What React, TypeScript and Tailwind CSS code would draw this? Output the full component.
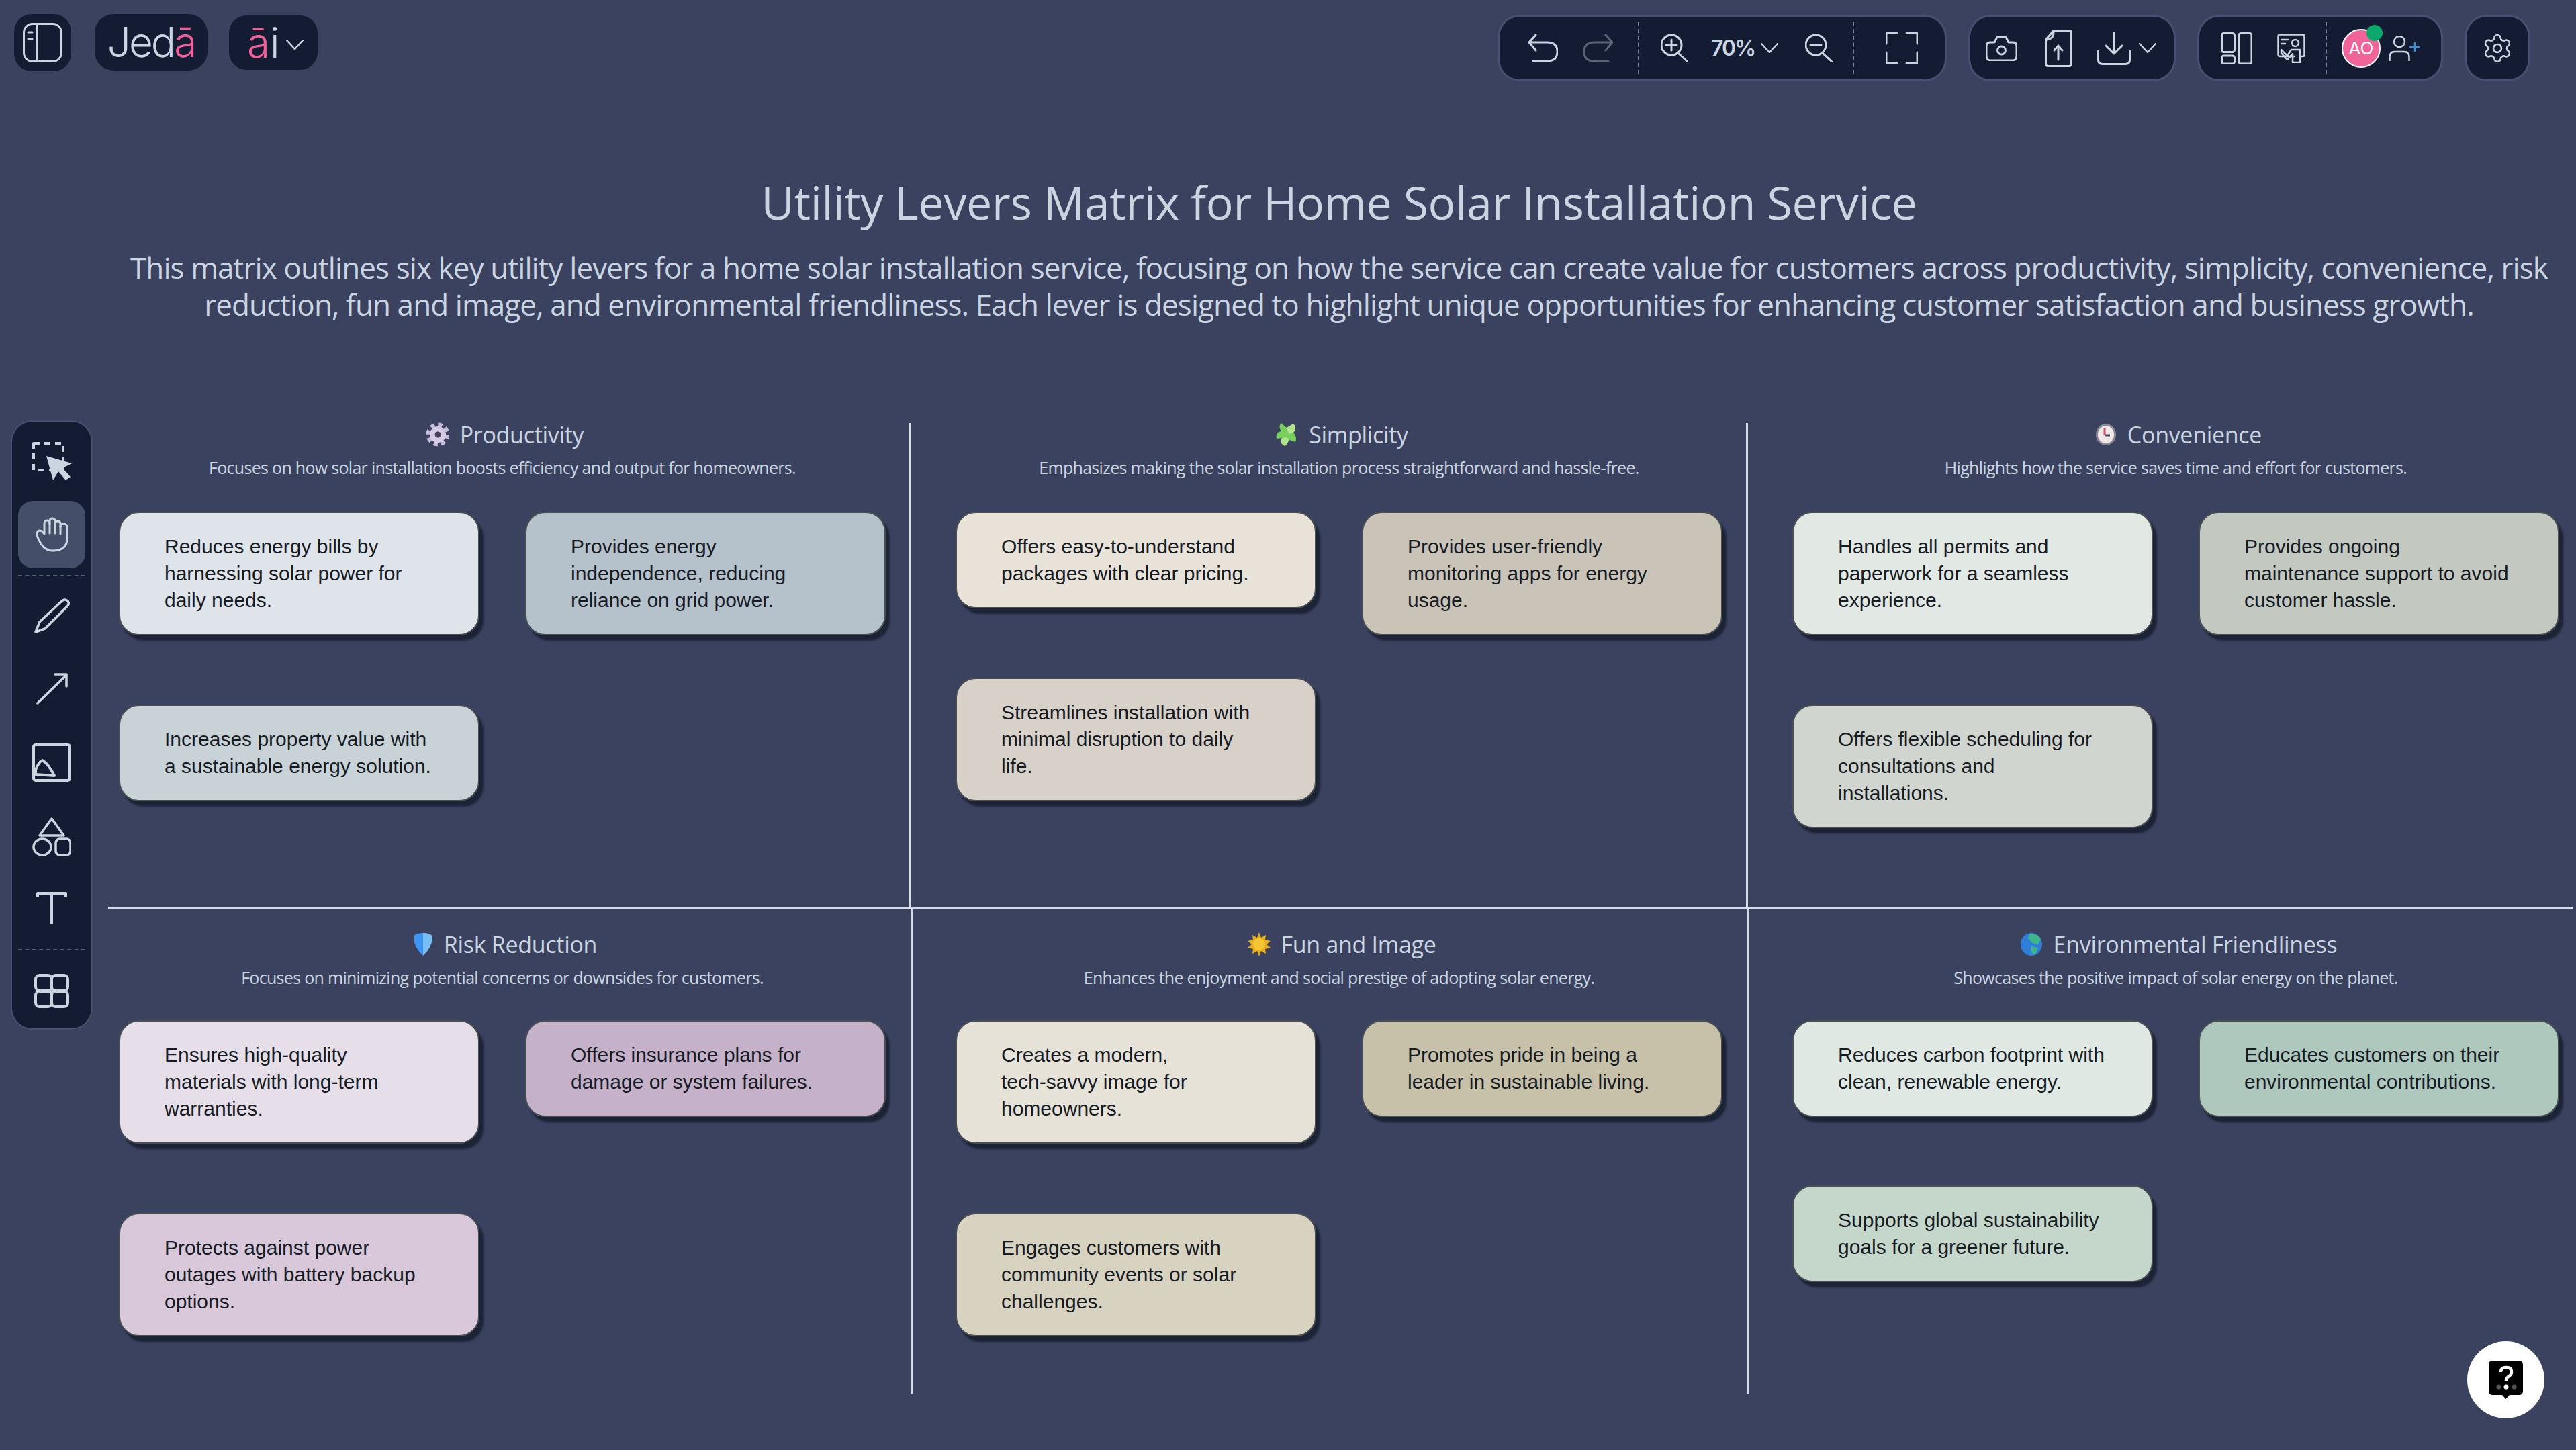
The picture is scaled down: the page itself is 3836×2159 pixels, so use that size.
import React from "react";
import { Settings } from "lucide-react";

const iconColor = "#cbd5e1";

interface SvgProps {
  w: number;
  h: number;
  stroke?: string;
  sw?: number;
  className?: string;
  children: React.ReactNode;
}

// every toolbar icon is drawn in real pixels, so the viewBox is the size
const Ico: React.FC<SvgProps> = ({ w, h, stroke = iconColor, sw = 3, className, children }) => (
  <svg
    width={w}
    height={h}
    viewBox={`0 0 ${w} ${h}`}
    fill="none"
    stroke={stroke}
    strokeWidth={sw}
    strokeLinecap="round"
    strokeLinejoin="round"
    className={`shrink-0 ${className ?? ""}`}
  >
    {children}
  </svg>
);

const Chevron: React.FC<{ className?: string; w?: number; h?: number }> = ({ className, w = 26, h = 15 }) => (
  <Ico w={w} h={h} sw={2.5} className={className}>
    <path d={`M1 1 L${w / 2} ${h - 1} L${w - 1} 1`} />
  </Ico>
);

const DashV: React.FC<{ className?: string }> = ({ className }) => (
  <div className={`h-[77px] w-0 border-l-2 border-dashed border-[#7b849c] ${className ?? ""}`} />
);

const DashH: React.FC<{ className?: string }> = ({ className }) => (
  <div className={`h-0 w-[100px] border-t-2 border-dashed border-[#56607c] ${className ?? ""}`} />
);

const Group: React.FC<{ className?: string; children: React.ReactNode }> = ({ className, children }) => (
  <div className={`flex h-[93px] items-center rounded-[30px] bg-[#141c33] ring-[3px] ring-[#475070] ${className ?? ""}`}>
    {children}
  </div>
);

const Toolbar: React.FC = () => (
  <div className="flex items-start justify-between pl-[21px] pr-[71px] pt-[21px]">
    <div className="flex items-start">
      <div className="flex h-[85px] w-[85px] items-center justify-center rounded-[26px] bg-[#141c33]">
        <Ico w={59} h={59}>
          <rect x="1.5" y="1.5" width="56" height="56" rx="13" />
          <path d="M21 2 V57 M8 14 H14 M8 24 H14" />
        </Ico>
      </div>
      <div className="ml-[35px] flex h-[84px] w-[168px] items-center justify-center rounded-[28px] bg-[#141c33] font-['Inter',sans-serif] text-[62px] font-light leading-none tracking-[-3px] text-[#cbd5e1]">
        Jed<span className="text-[#f0609a]">ā</span>
      </div>
      <div className="ml-[32px] mt-[2px] flex h-[81px] w-[132px] items-center rounded-[26px] bg-[#141c33] pl-[27px] font-['Inter',sans-serif] text-[62px] font-light leading-none text-[#cbd5e1]">
        <span className="text-[#f0609a]">ā</span>i
        <Chevron className="ml-[9px] mt-[6px]" />
      </div>
    </div>

    <div className="mt-[4px] flex items-start">
      <Group className="w-[663px] pl-[43px]">
        <Ico w={44} h={41}>
          <path d="M11 1 L1 12 L11 24 M1 12 H28 Q43 12 43 26 Q43 40 28 40 H7" />
        </Ico>
        <Ico w={44} h={41} stroke="#5b6375" className="ml-[38px]">
          <path d="M33 1 L43 12 L33 24 M43 12 H16 Q1 12 1 26 Q1 40 16 40 H37" />
        </Ico>
        <DashV className="ml-[37px]" />
        <Ico w={41} h={42} className="ml-[32px]">
          <circle cx="16" cy="16" r="15" />
          <path d="M27 29 L40 41 M16 8 V24 M8 16 H24" />
        </Ico>
        <span className="ml-[34px] w-[60px] font-['Inter',sans-serif] text-[32px] font-semibold tracking-[-2px] text-[#cbd5e1]">
          70%
        </span>
        <Chevron className="ml-[14px]" />
        <Ico w={41} h={42} className="ml-[40px]">
          <circle cx="16" cy="16" r="15" />
          <path d="M27 29 L40 41 M8 16 H24" />
        </Ico>
        <DashV className="ml-[30px]" />
        <Ico w={48} h={48} className="ml-[47px]">
          <path d="M1 17 V1.5 H17 M31 1.5 H47 V17 M1 30 V46.5 H17 M47 30 V46.5 H31" />
        </Ico>
      </Group>

      <Group className="ml-[38px] w-[303px] pl-[23px]">
        <Ico w={47} h={38}>
          <path d="M7 10 H13 L17 2 H30 L34 10 H40 Q46 10 46 16 V30 Q46 37 40 37 H7 Q1 37 1 30 V16 Q1 10 7 10 Z" />
          <circle cx="23.5" cy="22" r="6" />
        </Ico>
        <Ico w={41} h={56} className="ml-[41px]">
          <path d="M13 1.5 H36 Q39.5 1.5 39.5 5 V51 Q39.5 54.5 36 54.5 H5 Q1.5 54.5 1.5 51 V15 Z M13 1.5 Q14 15 1.5 15" />
          <path d="M20 45 V24 M14 31 L20 24 L26 31" />
        </Ico>
        <Ico w={50} h={50} className="ml-[37px]">
          <path d="M25 1 V33 M13 21 L25 33 L37 21 M1.5 29 V42 Q1.5 48.5 8 48.5 H42 Q48.5 48.5 48.5 42 V29" />
        </Ico>
        <Chevron className="ml-[12px]" />
      </Group>

      <Group className="ml-[38px] w-[360px] pl-[32px]">
        <Ico w={47} h={48}>
          <rect x="1.5" y="1.5" width="19" height="28" rx="3" />
          <rect x="1.5" y="35" width="19" height="12" rx="3" />
          <rect x="27" y="1.5" width="19" height="45.5" rx="3" />
        </Ico>
        <Ico w={42} h={44} sw={2.5} className="ml-[37px]">
          <path d="M26 34 H4 Q1.5 34 1.5 31 V4 Q1.5 1.5 4 1.5 H38 Q40.5 1.5 40.5 4 V32 Q40.5 34 38 34 H36" />
          <path d="M6 9 H16 M6 15 H12" />
          <circle cx="27" cy="14" r="5" />
          <path d="M6 24 L15 33 L21 24 H34 V43 H23 V30 L15 39 L6 29 Z" />
        </Ico>
        <DashV className="ml-[30px]" />
        <div className="relative ml-[22px] flex h-[58px] w-[58px] items-center justify-center rounded-full border-2 border-white bg-[#f0649a] font-['Inter',sans-serif] text-[26px] text-white">
          AO
          <span className="absolute -right-[5px] -top-[8px] h-[24px] w-[24px] rounded-full bg-[#0aa86a]" />
        </div>
        <Ico w={46} h={38} sw={2.5} className="ml-[12px]">
          <circle cx="16" cy="9" r="8" />
          <path d="M1.5 37 V32 Q1.5 24 9 24 H23 Q30.5 24 30.5 32 V37" />
          <path d="M39 11 V23 M32 17 H45" stroke="#3b8fd6" />
        </Ico>
      </Group>

      <Group className="ml-[38px] w-[92px] justify-center ring-0">
        <Settings size={48} strokeWidth={1.3} color={iconColor} />
      </Group>
    </div>
  </div>
);

const Sidebar: React.FC = () => (
  <div className="absolute left-[18px] top-[628px] flex h-[903px] w-[118px] flex-col items-center rounded-[30px] bg-[#141c33] pt-[30px] ring-[2px] ring-[#475070]">
    <Ico w={59} h={56} sw={4}>
      <path d="M2 2 H46 V42 H2 Z" strokeDasharray="9 7" strokeLinecap="butt" />
      <path d="M21 21 L59 32 L45 39 L57 52 L50 57 L39 44 L31 57 Z" fill={iconColor} stroke="none" />
    </Ico>
    <div className="mt-[32px] flex h-[100px] w-[100px] items-center justify-center rounded-[22px] bg-[#444e69]">
      <Ico w={49} h={52}>
        <path d="M2 27 Q1 21 6 20 Q10 20 13 25 V10 Q13 5 17 5 Q21 5 21 10 V6 Q21 2 25 2 Q29 2 29 6 V10 Q29 6 33 6 Q37 6 37 10 V14 Q37 10 41 10 Q47 10 47 15 V32 Q47 50 25 50 Q10 50 2 27 Z" />
        <path d="M21 9 V24 M29 9 V24 M37 13 V25" />
      </Ico>
    </div>
    <DashH className="mt-[10px]" />
    <Ico w={53} h={53} sw={3.5} className="mt-[32px]">
      <path d="M2 51 L8 36 L41 5 Q46 1 50 5 Q53 9 49 13 L16 46 Z" />
    </Ico>
    <Ico w={47} h={47} sw={3.5} className="mt-[59px]">
      <path d="M2 45 L45 3 M28 2 H45 V20" />
    </Ico>
    <Ico w={58} h={57} sw={4} className="mt-[58px]">
      <rect x="2" y="2" width="54" height="53" rx="3" />
      <path d="M5 39 Q10 27 15 25 Q24 30 33 48 L5 46 Z" />
    </Ico>
    <Ico w={58} h={58} sw={3.5} className="mt-[53px]">
      <path d="M29 2 L47 27 H11 Z" />
      <ellipse cx="15" cy="44" rx="13" ry="12" />
      <rect x="35" y="32" width="22" height="24" rx="6" />
    </Ico>
    <Ico w={46} h={50} sw={4} className="mt-[53px]">
      <path d="M2 8 V2 H44 V8 M23 2 V48" strokeLinecap="butt" />
    </Ico>
    <DashH className="mt-[35px]" />
    <Ico w={52} h={51} sw={4} className="mt-[35px]">
      <rect x="2" y="2" width="24" height="23" rx="6" />
      <rect x="26" y="2" width="24" height="23" rx="6" />
      <rect x="2" y="26" width="24" height="23" rx="6" />
      <rect x="26" y="26" width="24" height="23" rx="6" />
    </Ico>
  </div>
);

const GearEmoji = () => (
  <svg width="34" height="36" viewBox="0 0 34 36">
    <circle cx="17" cy="18" r="14" fill="none" stroke="#c9bcdd" strokeWidth="7" strokeDasharray="6 5" />
    <circle cx="17" cy="18" r="12" fill="#d6cce5" />
    <circle cx="17" cy="18" r="4.5" fill="#4a4160" />
  </svg>
);

const PuzzleEmoji = () => (
  <svg width="34" height="36" viewBox="0 0 34 36">
    <path d="M9 1 L17 8 L27 2 Q33 8 27 15 Q33 22 30 29 L21 26 L15 35 Q6 32 10 23 L2 24 Q0 14 9 13 Q4 6 9 1 Z" fill="#79cf5c" />
    <path d="M17 8 L27 2 Q33 8 27 15 L20 17 Z M15 35 Q6 32 10 23 L17 22 L21 26 Z" fill="#b2e58b" />
  </svg>
);

const ClockEmoji = () => (
  <svg width="32" height="36" viewBox="0 0 32 36">
    <ellipse cx="16" cy="18" rx="15" ry="16" fill="#8d8791" />
    <ellipse cx="16" cy="18" rx="12" ry="13" fill="#eee9e6" />
    <path d="M14 9 V19" stroke="#e0456f" strokeWidth="3" />
    <path d="M14 19 H22" stroke="#4a4652" strokeWidth="3" />
  </svg>
);

const ShieldEmoji = () => (
  <svg width="30" height="36" viewBox="0 0 30 36">
    <path d="M15 1 Q5 1 2 5 Q-1 20 15 35 Z" fill="#3f96f2" />
    <path d="M15 1 Q25 1 28 5 Q31 20 15 35 Z" fill="#79bdf6" />
  </svg>
);

const SunEmoji = () => (
  <svg width="34" height="36" viewBox="0 0 34 36">
    <path d="M17 0 L20 8 L27 4 L26 11 L34 13 L28 18 L34 23 L26 25 L27 32 L20 28 L17 36 L14 28 L7 32 L8 25 L0 23 L6 18 L0 13 L8 11 L7 4 L14 8 Z" fill="#e8ae1c" />
    <circle cx="17" cy="18" r="9" fill="#f7c531" />
  </svg>
);

const GlobeEmoji = () => (
  <svg width="34" height="36" viewBox="0 0 34 36">
    <ellipse cx="17" cy="18" rx="16" ry="17" fill="#2f7fd8" />
    <path d="M14 3 Q26 1 31 10 L27 18 L19 16 L12 9 Z M17 21 L27 23 L23 33 Q18 33 17 28 Z" fill="#3fb58a" />
  </svg>
);

interface Lever {
  icon: React.ReactNode;
  title: string;
  desc: string;
  rowGap: string;
  cards: { text: string; color: string }[];
}

// card texts carry their own line breaks, they render with whitespace-pre-line
const top: Lever[] = [
  {
    icon: <GearEmoji />,
    title: "Productivity",
    desc: "Focuses on how solar installation boosts efficiency and output for homeowners.",
    rowGap: "gap-y-[103px]",
    cards: [
      { text: "Reduces energy bills by\nharnessing solar power for\ndaily needs.", color: "bg-[#dfe4ea]" },
      { text: "Provides energy\nindependence, reducing\nreliance on grid power.", color: "bg-[#b5c1cb]" },
      { text: "Increases property value with\na sustainable energy solution.", color: "bg-[#c9d3d7]" },
    ],
  },
  {
    icon: <PuzzleEmoji />,
    title: "Simplicity",
    desc: "Emphasizes making the solar installation process straightforward and hassle-free.",
    rowGap: "gap-y-[63px]",
    cards: [
      { text: "Offers easy-to-understand\npackages with clear pricing.", color: "bg-[#e8e2d8]" },
      { text: "Provides user-friendly\nmonitoring apps for energy\nusage.", color: "bg-[#cac4b8]" },
      { text: "Streamlines installation with\nminimal disruption to daily\nlife.", color: "bg-[#d8d1c9]" },
    ],
  },
  {
    icon: <ClockEmoji />,
    title: "Convenience",
    desc: "Highlights how the service saves time and effort for customers.",
    rowGap: "gap-y-[103px]",
    cards: [
      { text: "Handles all permits and\npaperwork for a seamless\nexperience.", color: "bg-[#e2e8e3]" },
      { text: "Provides ongoing\nmaintenance support to avoid\ncustomer hassle.", color: "bg-[#c3c9c1]" },
      { text: "Offers flexible scheduling for\nconsultations and\ninstallations.", color: "bg-[#d0d6cf]" },
    ],
  },
];

const bottom: Lever[] = [
  {
    icon: <ShieldEmoji />,
    title: "Risk Reduction",
    desc: "Focuses on minimizing potential concerns or downsides for customers.",
    rowGap: "gap-y-[103px]",
    cards: [
      { text: "Ensures high-quality\nmaterials with long-term\nwarranties.", color: "bg-[#e6dfe9]" },
      { text: "Offers insurance plans for\ndamage or system failures.", color: "bg-[#c5b1c9]" },
      { text: "Protects against power\noutages with battery backup\noptions.", color: "bg-[#d8c8da]" },
    ],
  },
  {
    icon: <SunEmoji />,
    title: "Fun and Image",
    desc: "Enhances the enjoyment and social prestige of adopting solar energy.",
    rowGap: "gap-y-[103px]",
    cards: [
      { text: "Creates a modern,\ntech-savvy image for\nhomeowners.", color: "bg-[#e6e2d8]" },
      { text: "Promotes pride in being a\nleader in sustainable living.", color: "bg-[#c8c1a9]" },
      { text: "Engages customers with\ncommunity events or solar\nchallenges.", color: "bg-[#d8d3c1]" },
    ],
  },
  {
    icon: <GlobeEmoji />,
    title: "Environmental Friendliness",
    desc: "Showcases the positive impact of solar energy on the planet.",
    rowGap: "gap-y-[102px]",
    cards: [
      { text: "Reduces carbon footprint with\nclean, renewable energy.", color: "bg-[#dfe8e2]" },
      { text: "Educates customers on their\nenvironmental contributions.", color: "bg-[#aec8bd]" },
      { text: "Supports global sustainability\ngoals for a greener future.", color: "bg-[#c5d7ca]" },
    ],
  },
];

const LeverCell: React.FC<{ lever: Lever; className: string; cardsTop: string }> = ({ lever, className, cardsTop }) => (
  <div className={className}>
    <div className="w-[1142px]">
      <div className="flex h-[34px] items-center justify-center gap-[16px] pl-[8px] font-['Open_Sans',sans-serif] text-[34px] leading-[34px] tracking-[-0.3px] text-[#cbd5e1]">
        {lever.icon}
        <span>{lever.title}</span>
      </div>
      <p className="mt-[17px] text-center font-['Open_Sans',sans-serif] text-[25px] font-medium leading-[30px] tracking-[-0.7px] text-[#cbd5e1]">
        {lever.desc}
      </p>
      <div className={`grid grid-cols-[537px_537px] items-start gap-x-[68px] ${cardsTop} ${lever.rowGap}`}>
        {lever.cards.map((card) => (
          <div
            key={card.text}
            className={`whitespace-pre-line rounded-[30px] border-2 border-[#4b4f52] py-[30px] pl-[66px] font-['Liberation_Sans',sans-serif] text-[30px] leading-[40px] text-[#161b24] shadow-[6px_8px_3px_rgba(20,25,40,0.75)] ${card.color}`}
          >
            {card.text}
          </div>
        ))}
      </div>
    </div>
  </div>
);

export default function App() {
  return (
    <div className="relative h-[2159px] w-[3836px] overflow-hidden bg-[#3a4260]">
      <Toolbar />
      <Sidebar />

      <div className="pl-[152px] pt-[143px] text-center font-['Open_Sans',sans-serif] text-[#cbd5e1]">
        <h1 className="text-[68px] leading-[80px] tracking-[-0.3px]">
          Utility Levers Matrix for Home Solar Installation Service
        </h1>
        <p className="mx-auto mt-[30px] w-[3640px] text-[44px] leading-[55px] tracking-[-0.9px]">
          This matrix outlines six key utility levers for a home solar installation service, focusing on how the service can create value for customers across productivity, simplicity, convenience, risk reduction, fun and image, and environmental friendliness. Each lever is designed to highlight unique opportunities for enhancing customer satisfaction and business growth.
        </p>
      </div>

      <div className="ml-[161px] mt-[149px] w-[3670px]">
        <div className="flex h-[723px] border-b-[3px] border-[#d5dce8]">
          <LeverCell lever={top[0]} cardsTop="mt-[51px]" className="w-[1195px] border-r-[3px] border-[#d5dce8] pl-[16px]" />
          <LeverCell lever={top[1]} cardsTop="mt-[51px]" className="w-[1247px] border-r-[3px] border-[#d5dce8] pl-[67px]" />
          <LeverCell lever={top[2]} cardsTop="mt-[51px]" className="flex-1 pl-[66px]" />
        </div>
        <div className="flex h-[723px]">
          <LeverCell lever={bottom[0]} cardsTop="mt-[49px]" className="w-[1199px] border-r-[3px] border-[#d5dce8] pl-[16px] pt-[36px]" />
          <LeverCell lever={bottom[1]} cardsTop="mt-[49px]" className="w-[1245px] border-r-[3px] border-[#d5dce8] pl-[63px] pt-[36px]" />
          <LeverCell lever={bottom[2]} cardsTop="mt-[49px]" className="flex-1 pl-[64px] pt-[36px]" />
        </div>
      </div>

      <button className="absolute left-[3674px] top-[1997px] flex h-[115px] w-[115px] items-center justify-center rounded-full bg-white">
        <svg width="51" height="57" viewBox="0 0 51 57">
          <path d="M6 0 H45 Q51 0 51 6 V45 Q51 51 45 51 H31 L25.5 57 L20 51 H6 Q0 51 0 45 V6 Q0 0 6 0 Z" fill="#000" />
          <path d="M18 17 Q18 10 26 10 Q34 10 34 17 Q34 21 29 24 Q26 26 26 30" fill="none" stroke="#fff" strokeWidth="4.5" />
          <circle cx="15" cy="39" r="3.5" fill="#555" />
          <circle cx="26" cy="39" r="3.5" fill="#fff" />
          <circle cx="38" cy="39" r="3.5" fill="#555" />
        </svg>
      </button>
    </div>
  );
}
